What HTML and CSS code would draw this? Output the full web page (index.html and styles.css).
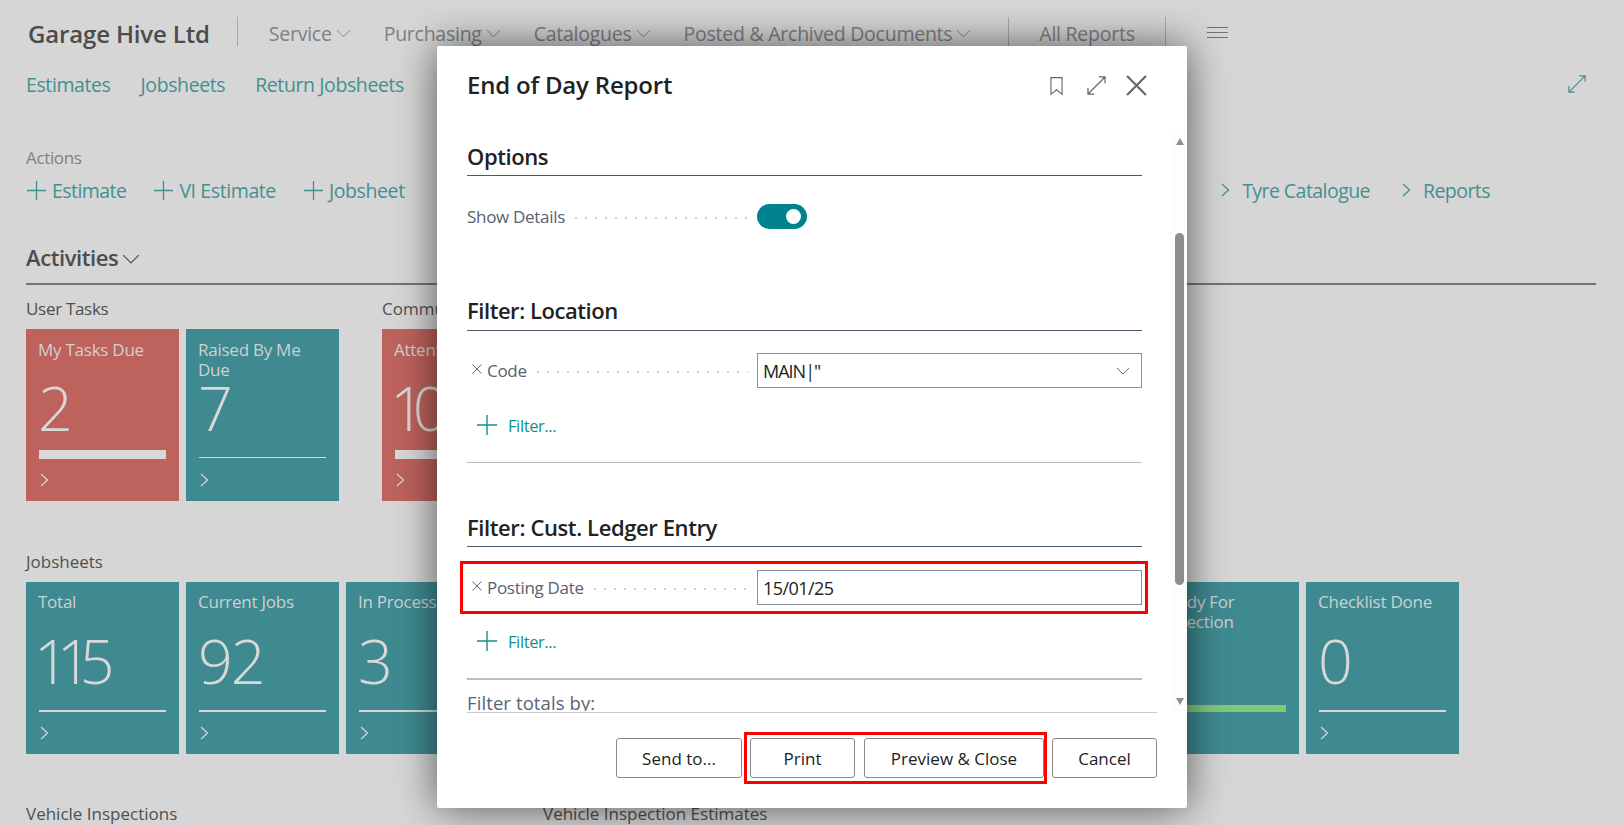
FILE: index.html
```html
<!DOCTYPE html>
<html lang="en">
<head>
<meta charset="utf-8">
<title>End of Day Report</title>
<link rel="stylesheet" href="styles.css">
</head>
<body>
<svg class="defs" width="0" height="0" aria-hidden="true">
  <symbol id="chev-down" viewBox="0 0 16 9"><path d="M1 1l7 7 7-7" fill="none" stroke="currentColor" stroke-width="1"/></symbol>
  <symbol id="chev-right" viewBox="0 0 9 14"><path d="M1 1l6.500 6-6.500 6" fill="none" stroke="currentColor" stroke-width="1.300"/></symbol>
  <symbol id="plus" viewBox="0 0 20 20"><path d="M10 0v20M0 10h20" fill="none" stroke="currentColor" stroke-width="1.400"/></symbol>
  <symbol id="expand" viewBox="0 0 20 20"><path d="M1 19L19 1M12.500 1h6.500v6.500M1 12.500v6.500h6.500" fill="none" stroke="currentColor" stroke-width="1.300"/></symbol>
  <symbol id="cross" viewBox="0 0 10 10"><path d="M.5.500l9 9M9.500.500l-9 9" fill="none" stroke="currentColor" stroke-width="1"/></symbol>
</svg>

<div class="page">
  <header class="topbar">
    <span class="brand">Garage Hive Ltd</span>
    <span class="vline vline-brand"></span>
    <nav class="menu">
      <span class="menu-item">Service<svg class="menu-chev"><use href="#chev-down"/></svg></span>
      <span class="menu-item">Purchasing<svg class="menu-chev"><use href="#chev-down"/></svg></span>
      <span class="menu-item">Catalogues<svg class="menu-chev"><use href="#chev-down"/></svg></span>
      <span class="menu-item">Posted &amp; Archived Documents<svg class="menu-chev"><use href="#chev-down"/></svg></span>
    </nav>
    <span class="vline vline-a"></span>
    <span class="menu-item">All Reports</span>
    <span class="vline vline-b"></span>
    <span class="burger"><i></i><i></i><i></i></span>
  </header>

  <div class="linkrow">
    <a class="link">Estimates</a>
    <a class="link">Jobsheets</a>
    <a class="link">Return Jobsheets</a>
    <svg class="expand"><use href="#expand"/></svg>
  </div>

  <div class="actions-label">Actions</div>
  <div class="actions">
    <a class="action"><svg class="action-plus"><use href="#plus"/></svg>Estimate</a>
    <a class="action"><svg class="action-plus"><use href="#plus"/></svg>VI Estimate</a>
    <a class="action"><svg class="action-plus"><use href="#plus"/></svg>Jobsheet</a>
    <span class="actions-right">
      <a class="action"><svg class="action-chev"><use href="#chev-right"/></svg>Tyre Catalogue</a>
      <a class="action"><svg class="action-chev"><use href="#chev-right"/></svg>Reports</a>
    </span>
  </div>

  <h2 class="activities">Activities<svg class="activities-chev"><use href="#chev-down"/></svg></h2>

  <div class="groups groups-first">
    <section class="group group-user">
      <h3 class="group-label">User Tasks</h3>
      <div class="tiles">
        <article class="tile tile-red">
          <div class="tile-title">My Tasks Due</div><div class="tile-num">2</div>
          <div class="tile-bar"><span class="bar bar-full"></span></div>
          <svg class="tile-chev"><use href="#chev-right"/></svg>
        </article>
        <article class="tile">
          <div class="tile-title">Raised By Me Due</div><div class="tile-num">7</div>
          <div class="tile-bar"><span class="bar bar-thin"></span></div>
          <svg class="tile-chev"><use href="#chev-right"/></svg>
        </article>
      </div>
    </section>
    <section class="group">
      <h3 class="group-label">Communications</h3>
      <div class="tiles">
        <article class="tile tile-red">
          <div class="tile-title">Attention</div><div class="tile-num tile-num-tight">10</div>
          <div class="tile-bar"><span class="bar bar-full"></span></div>
          <svg class="tile-chev"><use href="#chev-right"/></svg>
        </article>
      </div>
    </section>
  </div>

  <section class="group group-jobs">
    <h3 class="group-label">Jobsheets</h3>
    <div class="tiles">
      <article class="tile"><div class="tile-title">Total</div><div class="tile-num tile-num-tight">115</div><div class="tile-bar"><span class="bar"></span></div><svg class="tile-chev"><use href="#chev-right"/></svg></article>
      <article class="tile"><div class="tile-title">Current Jobs</div><div class="tile-num">92</div><div class="tile-bar"><span class="bar"></span></div><svg class="tile-chev"><use href="#chev-right"/></svg></article>
      <article class="tile"><div class="tile-title">In Process</div><div class="tile-num">3</div><div class="tile-bar"><span class="bar"></span></div><svg class="tile-chev"><use href="#chev-right"/></svg></article>
      <article class="tile"></article>
      <article class="tile"></article>
      <article class="tile"></article>
      <article class="tile"></article>
      <article class="tile"><div class="tile-title">Ready For Collection</div><div class="tile-num"></div><div class="tile-bar"><span class="bar bar-green"></span></div><svg class="tile-chev"><use href="#chev-right"/></svg></article>
      <article class="tile"><div class="tile-title">Checklist Done</div><div class="tile-num">0</div><div class="tile-bar"><span class="bar"></span></div><svg class="tile-chev"><use href="#chev-right"/></svg></article>
    </div>
  </section>

  <div class="groups groups-last">
    <h3 class="group-label group-vi">Vehicle Inspections</h3>
    <h3 class="group-label">Vehicle Inspection Estimates</h3>
  </div>
</div>

<div class="modal" role="dialog">
  <div class="modal-head">
    <h1 class="modal-title">End of Day Report</h1>
    <svg class="head-icon head-bookmark" viewBox="0 0 14 20"><path d="M1 1h12v18l-6-5-6 5z" fill="none" stroke="currentColor" stroke-width="1.200"/></svg>
    <svg class="head-icon head-expand"><use href="#expand"/></svg>
    <svg class="head-icon head-close"><use href="#cross"/></svg>
  </div>

  <div class="modal-body">
    <div class="form">
      <h2 class="form-head form-head-first">Options</h2>
      <div class="field field-show">
        <span class="field-label">Show Details</span><span class="dots"></span>
        <span class="toggle"><span class="thumb"></span></span>
      </div>

      <h2 class="form-head form-head-loc">Filter: Location</h2>
      <div class="field">
        <svg class="field-x"><use href="#cross"/></svg>
        <span class="field-label">Code</span><span class="dots"></span>
        <div class="input input-tight">MAIN|"<svg class="input-chev"><use href="#chev-down"/></svg></div>
      </div>
      <a class="add-filter add-first"><svg class="add-plus"><use href="#plus"/></svg>Filter...</a>
      <hr class="rule rule-a">

      <h2 class="form-head form-head-cust">Filter: Cust. Ledger Entry</h2>
      <div class="highlight-field">
        <div class="field">
          <svg class="field-x"><use href="#cross"/></svg>
          <span class="field-label">Posting Date</span><span class="dots"></span>
          <div class="input">15/01/25</div>
        </div>
      </div>
      <a class="add-filter add-second"><svg class="add-plus"><use href="#plus"/></svg>Filter...</a>
      <hr class="rule rule-b">
      <div class="totals">Filter totals by:</div>
    </div>
    <div class="scrollbar">
      <span class="arrow arrow-up"></span>
      <span class="scroll-thumb"></span>
      <span class="arrow arrow-down"></span>
    </div>
  </div>

  <div class="modal-foot">
    <button class="btn btn-send">Send to...</button>
    <div class="highlight-btns">
      <button class="btn btn-print">Print</button>
      <button class="btn btn-preview">Preview &amp; Close</button>
    </div>
    <button class="btn btn-cancel">Cancel</button>
  </div>
</div>
</body>
</html>
```
FILE: styles.css
```css
* { box-sizing: border-box; }
html, body { margin: 0; padding: 0; }
body {
  width: 1624px;
  height: 825px;
  overflow: hidden;
  position: relative;
  background: #d6d6d6;
  font-family: "Open Sans", "Noto Sans", "Liberation Sans", sans-serif;
  color: #555;
}
.defs { position: absolute; }
h1, h2, h3 { margin: 0; font: inherit; }
svg { display: block; flex: none; }

.page { padding: 17px 28px 0 26px; }

.topbar { display: flex; align-items: center; height: 29px; }
.brand { padding-top: 4px; font-size: 24px; font-weight: 600; color: #4c4c4c; margin-left: 2px; letter-spacing: -.15px; white-space: nowrap; }
.vline { width: 1px; height: 29px; background: #a5a8ac; flex: none; }
.vline-brand { margin-left: 27px; margin-right: 31px; }
.vline-a { margin-left: 37px; margin-right: 30px; }
.vline-b { margin-left: 30px; margin-right: 41px; }
.menu { display: flex; gap: 33px; }
.menu-item { display: flex; align-items: center; padding-top: 4px; font-size: 19.500px; color: #7c8087; letter-spacing: -.25px; white-space: nowrap; }
.menu-chev { width: 15px; height: 9px; margin-left: 4px; }
.burger { display: flex; flex-direction: column; gap: 4px; width: 21px; padding-top: 2px; }
.burger i { display: block; height: 1px; background: #6f747c; }

.linkrow { display: flex; align-items: center; gap: 30px; height: 24px; margin-top: 26px; }
.link { font-size: 19.500px; color: #44908f; letter-spacing: -.4px; }
.expand { width: 18px; height: 18px; margin-left: auto; margin-right: 10px; color: #44908f; }

.actions-label { height: 22px; line-height: 22px; margin-top: 51px; font-size: 17px; color: #7d8187; letter-spacing: -.35px; }
.actions { display: flex; align-items: center; gap: 27px; height: 26px; margin-top: 8px; }
.action { display: flex; align-items: center; font-size: 19.500px; color: #44908f; letter-spacing: -.4px; white-space: nowrap; }
.actions > .action:first-child { letter-spacing: -.55px; }
.action-plus { width: 19px; height: 19px; margin-left: 1px; margin-right: 6px; }
.action-chev { width: 9px; height: 14px; margin-right: 12px; }
.actions-right { display: flex; gap: 32px; margin-left: auto; margin-right: 106px; }
.actions-right .action { letter-spacing: -.55px; }

.activities { display: flex; align-items: center; height: 42px; padding-bottom: 12px; margin-top: 40px; border-bottom: 2px solid #6f737a; font-size: 22px; font-weight: 600; color: #4c4c4c; letter-spacing: -.4px; }
.activities-chev { width: 18px; height: 10px; margin-left: 4px; margin-top: 3px; }

.groups { display: flex; }
.groups-first { margin-top: 13px; }
.group-user { width: 356px; }
.group-label { height: 22px; line-height: 22px; font-size: 17px; font-weight: 500; color: #505050; letter-spacing: 0; white-space: nowrap; }
.group-user .group-label { letter-spacing: -.3px; }
.group-jobs { margin-top: 50px; }
.tiles { display: flex; gap: 7px; margin-top: 9px; }
.tile {
  display: flex; flex-direction: column;
  flex: none; width: 153px; height: 172px;
  padding: 11px 13px 0;
  background: #3f8a91;
  color: #d3d6d6;
}
.tile-red { background: #bd625d; }
.tile-title { height: 40px; font-size: 17px; line-height: 20px; letter-spacing: -.25px; margin-left: -1px; opacity: .95; }
.group-jobs .tile-title { margin-top: -1px; margin-bottom: 1px; }
.tile-num { height: 56px; line-height: 56px; margin-left: -1px; font-size: 61px; font-weight: 300; color: #d8d8d8; letter-spacing: -2px; white-space: nowrap; }
.tile-num-tight { margin-left: -5px; letter-spacing: -12px; }
.tile-bar { display: flex; align-items: flex-end; height: 23px; }
.bar { display: block; width: 100%; height: 2px; background: #d8d8d8; }
.bar-full { height: 9px; }
.bar-thin { height: 1px; margin-bottom: 1px; }
.bar-green { height: 7px; background: #83c878; }
.tile-chev { width: 9px; height: 14px; margin-top: 14px; margin-left: 1px; color: #d0d4d4; }

.groups-last { margin-top: 49px; }
.group-vi { width: 517px; }

.modal {
  position: absolute;
  left: 437px; top: 46px;
  display: flex; flex-direction: column;
  width: 750px; height: 762px;
  background: #fff;
  border-radius: 2px;
  box-shadow: 0 0 40px rgba(0,0,0,.6);
  color: #222;
}
.modal-head { display: flex; align-items: center; height: 84px; padding: 0 40px 7px 30px; }
.modal-title { font-size: 24px; font-weight: 600; color: #222; letter-spacing: -.2px; margin-right: auto; white-space: nowrap; }
.head-icon { color: #666; margin-top: 2px; }
.head-bookmark { width: 13px; height: 20px; }
.head-expand { width: 19px; height: 19px; margin-left: 24px; }
.head-close { width: 21px; height: 21px; margin-left: 20px; }

.modal-body { display: flex; height: 583px; padding-left: 30px; }
.form { width: 690px; height: 583px; padding-right: 15px; border-bottom: 1px solid #c9c9c9; }
.form-head { box-sizing: content-box; height: 33px; line-height: 28px; border-bottom: 1px solid #4a5a6a; margin-top: 12px; font-size: 22px; font-weight: 600; color: #222; letter-spacing: -.4px; }
.form-head-loc { margin-top: 64px; line-height: 26px; letter-spacing: -.45px; }
.form-head-cust { margin-top: 50px; }

.field { display: flex; align-items: center; height: 35px; margin-top: 22px; }
.field-label { font-size: 17px; color: #566270; letter-spacing: -.3px; white-space: nowrap; }
.field-show .field-label { margin-top: 2px; }
.field-show .dots { margin-top: 5px; }
.field-x { width: 10px; height: 10px; margin-left: 5px; margin-right: 5px; margin-top: -3px; color: #666; }
.dots { flex: 1; height: 2px; margin: 3px 9px 0 10px; background: radial-gradient(circle at 1px 1px, #d2d2d2 1px, transparent 1.300px) 0 0 / 10px 2px repeat-x; }
.toggle { display: flex; align-items: center; justify-content: flex-end; width: 50px; height: 25px; margin-right: 335px; margin-top: 2px; padding-right: 6px; border-radius: 13px; background: #00838f; }
.thumb { width: 15px; height: 15px; border-radius: 50%; background: #fff; }
.input { display: flex; align-items: center; justify-content: space-between; flex: none; width: 385px; height: 35px; padding: 0 11px 0 5px; border: 1px solid #8a8f96; font-size: 18px; color: #222; letter-spacing: -.55px; }
.input-tight { letter-spacing: -1px; }
.input-chev { width: 14px; height: 8px; color: #555; }

.add-filter { display: flex; align-items: center; height: 20px; margin-top: 27px; padding-left: 10px; font-size: 16.500px; color: #14908f; letter-spacing: -.4px; }
.add-second { margin-top: 26px; }
.add-plus { width: 20px; height: 20px; margin-right: 11px; }

.rule { margin: 27px 0 0; border: 0; height: 1px; background: #bcbcbc; }
.rule-b { height: 2px; margin-top: 27px; }
.totals { height: 20px; margin-top: 11px; overflow: hidden; line-height: 24px; font-size: 18.500px; color: #5a6573; letter-spacing: .1px; }

.highlight-field { margin: 14px -6px -9px -7px; padding: 6px 3px 6px 4px; border: 3px solid #f00; }
.highlight-field .field { margin-top: 0; }

.scrollbar { display: flex; flex-direction: column; align-items: center; width: 15px; height: 582px; margin-left: 15px; padding-top: 8px; background: #fdfdfd; }
.arrow { width: 0; height: 0; border-left: 4.500px solid transparent; border-right: 4.500px solid transparent; }
.arrow-up { border-bottom: 7px solid #8e8e8e; }
.arrow-down { border-top: 7px solid #8e8e8e; margin-top: 113px; }
.scroll-thumb { width: 9px; height: 352px; margin-top: 88px; border-radius: 5px; background: #8e8e8e; }

.modal-foot { display: flex; justify-content: flex-end; padding: 25px 30px 0 0; }
.btn { height: 40px; padding: 0; border: 1px solid #8a8a8a; border-radius: 3px; background: #fff; font: 500 17px "Open Sans", "Noto Sans", sans-serif; color: #222; cursor: pointer; }
.btn-send { width: 126px; }
.btn-print { width: 105px; }
.btn-preview { width: 180px; margin-left: 9px; }
.btn-cancel { width: 105px; margin-left: 5px; }
.highlight-btns { display: flex; margin: -6px 0; margin-left: 2px; padding: 3px 0 3px 3px; border: 3px solid #f00; }
```
